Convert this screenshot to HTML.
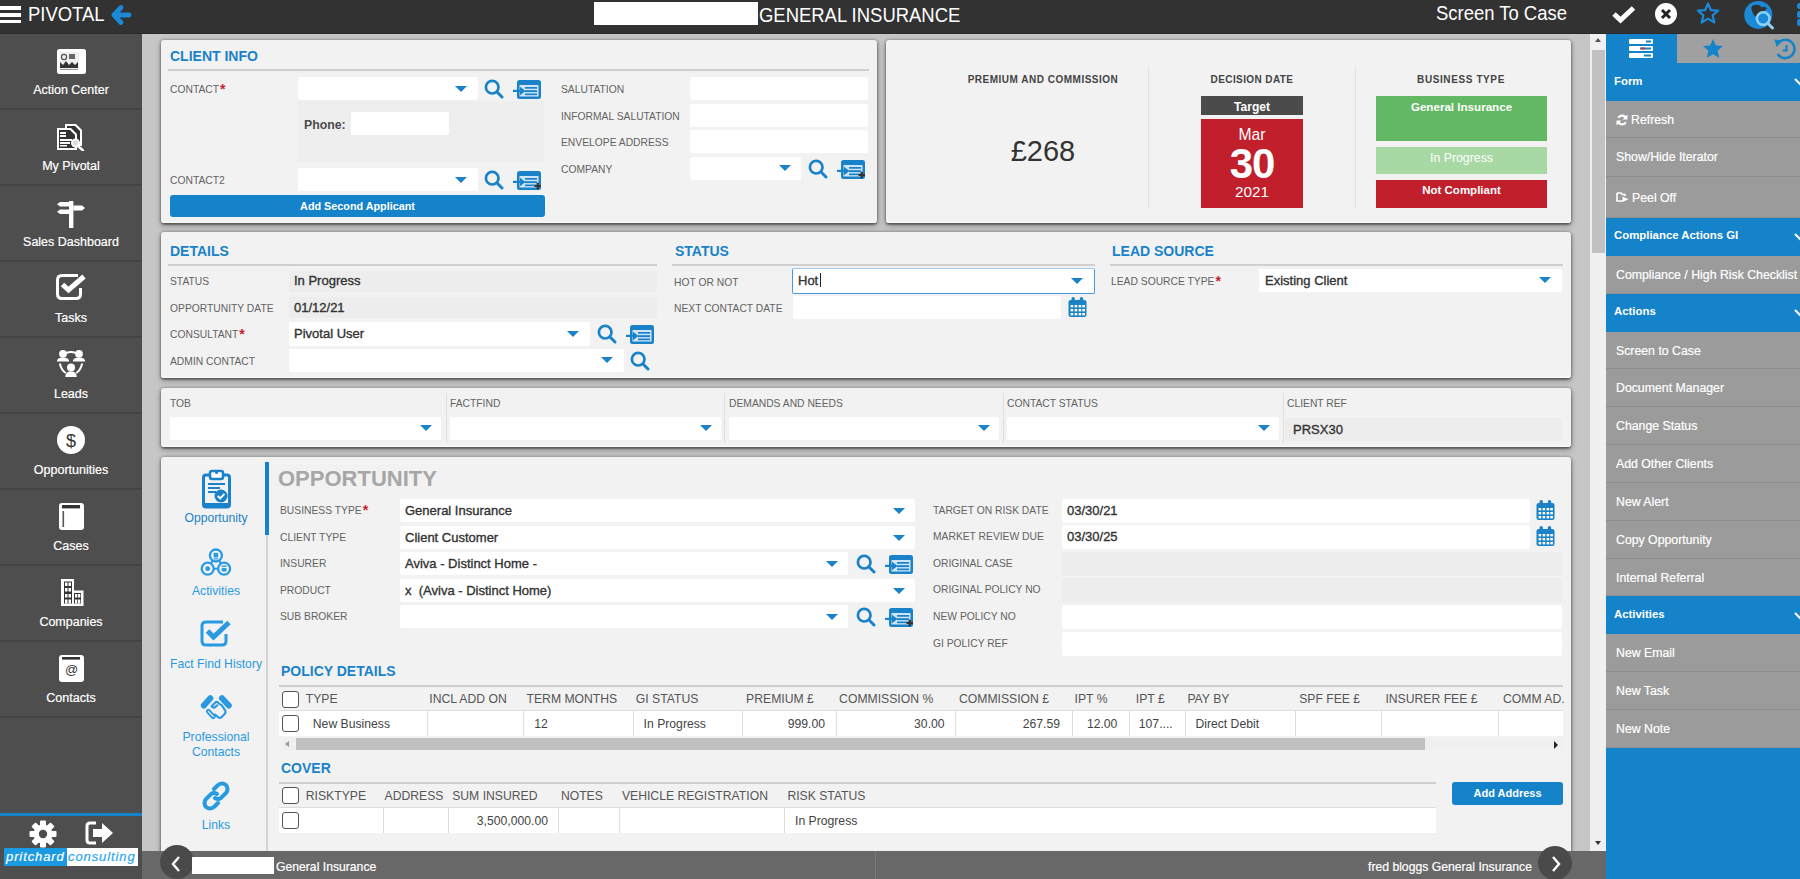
<!DOCTYPE html>
<html><head><meta charset="utf-8">
<style>
*{box-sizing:border-box;margin:0;padding:0}
body{width:1800px;height:879px;overflow:hidden;position:relative;font-family:"Liberation Sans",sans-serif;background:#c6c6c6;color:#333}
.a{position:absolute}
#top{left:0;top:0;width:1800px;height:34px;background:#323232;color:#fff;border-bottom:1px solid #2a2a2a}
#side{left:0;top:34px;width:142px;height:845px;background:#4e4e4e}
.si{position:absolute;left:0;width:142px;height:76px;border-bottom:2px solid #444;color:#fff;font-size:12.5px;text-align:center}
.si span{position:absolute;left:0;right:0;top:49px;-webkit-text-stroke:.2px #fff}
.si svg{position:absolute;left:56px;top:14px}
.panel{position:absolute;background:#f2f2f2;box-shadow:inset 0 -1.5px 0 #f8f8f8,0 2px 2px rgba(0,0,0,.33),0 3px 6px rgba(0,0,0,.25),-1px 0 3px rgba(0,0,0,.2),1px 0 3px rgba(0,0,0,.2);border-radius:3px}
.h{position:absolute;margin-top:1px;color:#1a82c8;font-weight:bold;font-size:14px;}
.ln{position:absolute;height:2px;background:#cfcfcf}
.lb{position:absolute;margin-top:1px;font-size:10.3px;color:#636363;text-transform:uppercase;white-space:nowrap}
.req{color:#c8202c;font-size:14px;line-height:14px;position:absolute;top:-2px;margin-left:1px;font-weight:bold}
.in{position:absolute;background:#fff;border-radius:2px}
.dis{position:absolute;background:#ededed;border-radius:2px}
.val{position:absolute;font-size:13px;color:#333;white-space:nowrap;-webkit-text-stroke:.35px #333}
.dd{position:absolute;width:0;height:0;border-left:6px solid transparent;border-right:6px solid transparent;border-top:6px solid #1a82c8}
#rp{left:1606px;top:34px;width:194px;height:845px;background:#1483c9}
.ri{position:absolute;left:0;width:194px;height:38px;background:#9b9b9b;border-bottom:1px solid #8d8d8d;color:#fff;font-size:12.3px;padding-left:10px;line-height:37px;white-space:nowrap;overflow:hidden;-webkit-text-stroke:.2px #fff}
.rh{position:absolute;left:0;width:194px;height:38px;background:#1483c9;color:#fff;font-size:11.4px;font-weight:bold;padding-left:8px;line-height:37px;white-space:nowrap}
#bot{left:142px;top:851px;width:1464px;height:28px;background:#686868}
.nt{position:absolute;font-size:12.2px;color:#2a9ae0;text-align:center;white-space:nowrap}
.th{position:absolute;font-size:12.2px;color:#555;white-space:nowrap;top:0}
.cb{position:absolute;width:17px;height:17px;border:1.5px solid #555;border-radius:3px;background:#fff}
</style></head>
<body>
<svg width="0" height="0" style="position:absolute"><defs>
<symbol id="srch" viewBox="0 0 20 20"><circle cx="8.2" cy="8.2" r="6.3" fill="none" stroke="#1a82c8" stroke-width="2.7"/><path d="M12.8 12.8 L18 18" stroke="#1a82c8" stroke-width="3" stroke-linecap="round"/></symbol>
<symbol id="add" viewBox="0 0 28 19"><rect x="4" y="0" width="24" height="19" rx="2.5" fill="#1a82c8"/><rect x="6.5" y="5" width="19" height="11.5" fill="#cfe4f4"/><rect x="12" y="7" width="12" height="1.7" fill="#1a82c8"/><rect x="12" y="10.2" width="12" height="1.9" fill="#1a82c8"/><rect x="12" y="13.5" width="12" height="1.7" fill="#1a82c8"/><path d="M0.8 10.9 H8" stroke="#1a82c8" stroke-width="2.4" stroke-linecap="round"/><path d="M7 6.8 L12.5 11 L7 15.2 Z" fill="#1a82c8"/></symbol>
<symbol id="addp" viewBox="0 0 28 19"><use href="#add"/><path d="M21.5 15 H28 M24.75 11.8 V18.3" stroke="#333" stroke-width="2.2"/></symbol>
<symbol id="cal" viewBox="0 0 19 20"><rect x="0.5" y="3" width="18" height="17" rx="2.2" fill="#1a82c8"/><rect x="3.5" y="0" width="3.4" height="5.5" rx="1.7" fill="#1a82c8"/><rect x="11.8" y="0" width="3.4" height="5.5" rx="1.7" fill="#1a82c8"/><g fill="#fff"><rect x="2.6" y="8" width="2.6" height="2.4"/><rect x="6.6" y="8" width="2.6" height="2.4"/><rect x="10.6" y="8" width="2.6" height="2.4"/><rect x="14.3" y="8" width="2.6" height="2.4"/><rect x="2.6" y="12" width="2.6" height="2.4"/><rect x="6.6" y="12" width="2.6" height="2.4"/><rect x="10.6" y="12" width="2.6" height="2.4"/><rect x="14.3" y="12" width="2.6" height="2.4"/><rect x="2.6" y="16" width="2.6" height="2.4"/><rect x="6.6" y="16" width="2.6" height="2.4"/><rect x="10.6" y="16" width="2.6" height="2.4"/><rect x="14.3" y="16" width="2.6" height="2.4"/></g></symbol>
</defs></svg>
<!-- TOP BAR -->
<div class="a" id="top">
<div class="a" style="left:0;top:6px;width:21px;height:3.5px;background:#fff"></div>
<div class="a" style="left:0;top:13px;width:21px;height:3.5px;background:#fff"></div>
<div class="a" style="left:0;top:19.5px;width:21px;height:3.5px;background:#fff"></div>
<div class="a" style="left:28px;top:2.3px;font-size:20.5px;line-height:24px;color:#fff;transform:scaleX(.9);transform-origin:0 0">PIVOTAL</div>
<svg class="a" style="left:110px;top:4px" width="22" height="22" viewBox="0 0 22 22"><path d="M11 3.5 L4 11 L11 18.5 M4 11 H19" stroke="#1a8ad8" stroke-width="4.8" fill="none" stroke-linecap="round" stroke-linejoin="round"/></svg>
<div class="a" style="left:594px;top:2px;width:164px;height:23px;background:#fff"></div>
<div class="a" style="left:759px;top:2.8px;font-size:20.5px;line-height:24px;color:#fff;transform:scaleX(.9);transform-origin:0 0">GENERAL INSURANCE</div>
<div class="a" style="left:1436px;top:1.3px;font-size:20.5px;line-height:24px;color:#fff;transform:scaleX(.9);transform-origin:0 0">Screen To Case</div>
<svg class="a" style="left:1611px;top:4px" width="26" height="20" viewBox="0 0 26 20"><path d="M3 10 L9.5 16 L22.5 4" stroke="#fff" stroke-width="5" fill="none" stroke-linejoin="miter"/></svg>
<svg class="a" style="left:1654px;top:2px" width="24" height="24" viewBox="0 0 24 24"><circle cx="12" cy="12" r="11" fill="#fff"/><path d="M8 8 L16 16 M16 8 L8 16" stroke="#222" stroke-width="3"/></svg>
<svg class="a" style="left:1696px;top:2px" width="24" height="23" viewBox="0 0 24 23"><path d="M12 1.5 L14.9 8.2 L22.2 8.6 L16.6 13.3 L18.4 20.5 L12 16.6 L5.6 20.5 L7.4 13.3 L1.8 8.6 L9.1 8.2 Z" stroke="#1a8ad8" stroke-width="2.2" fill="none" stroke-linejoin="round"/></svg>
<svg class="a" style="left:1743px;top:0px" width="34" height="32" viewBox="0 0 34 32"><circle cx="15.3" cy="14.9" r="14" fill="#1a8ad8"/><path d="M9.5 5.5 Q14 4 17 5.5 L18.5 7.5 L21.5 6.5 L24 8.5 L20 12 L17 14 L15 17 L12 16.5 L9.5 12.5 L8.2 8 Z" fill="#323232"/><circle cx="20.2" cy="18.6" r="6.3" fill="#1a8ad8" stroke="#8fd0f5" stroke-width="2.6"/><path d="M24.8 23.2 L29.5 28" stroke="#8fd0f5" stroke-width="3" stroke-linecap="round"/></svg>
<div class="a" style="left:1797px;top:2.5px;width:7px;height:6.5px;border-radius:2.5px;background:#1a8ad8"></div>
<div class="a" style="left:1797px;top:11px;width:7px;height:6.5px;border-radius:2.5px;background:#1a8ad8"></div>
<div class="a" style="left:1797px;top:19px;width:7px;height:6.5px;border-radius:2.5px;background:#1a8ad8"></div>
</div>

<!-- SIDEBAR -->
<div class="a" id="side">
<div class="si" style="top:0px"><svg class="a" style="left:56px;top:14px" width="31" height="27" viewBox="0 0 31 27"><rect x="1" y="1" width="29" height="25" rx="2.5" fill="#fff"/><rect x="4" y="4" width="19" height="17" fill="#eee"/><circle cx="8" cy="9" r="2.6" fill="none" stroke="#555" stroke-width="1.2"/><rect x="13" y="6" width="6" height="5" fill="#666"/><path d="M4 20 L4 14 L7 17 L10 13 L13 17 L16 14 L19 17 L22 14 L22 20 Z" fill="#333"/><rect x="4" y="21" width="18" height="1" fill="#999"/></svg><span>Action Center</span></div>
<div class="si" style="top:76px"><svg class="a" style="left:56px;top:13px" width="32" height="28" viewBox="0 0 32 28"><path d="M9 1 H20 L26 7 V23 H9 Z" fill="#fff" stroke="#4b4b4b" stroke-width="0"/><path d="M11 3 H19 L24 8 V21 H11 Z" fill="#333"/><path d="M1 5 H15 L21 11 V27 H1 Z" fill="#fff"/><path d="M3 7 H14 L19 12 V25 H3 Z" fill="#333"/><rect x="4" y="9" width="6" height="2" fill="#fff"/><rect x="4" y="12" width="6" height="2" fill="#fff"/><rect x="4" y="16" width="12" height="2" fill="#fff"/><rect x="4" y="19" width="10" height="2" fill="#fff"/><rect x="4" y="22" width="7" height="1.5" fill="#fff"/><circle cx="19.5" cy="20" r="3.6" fill="#ddd" stroke="#fff" stroke-width="1.8"/><path d="M22 23 L27 27.5" stroke="#fff" stroke-width="2.4" stroke-linecap="round"/></svg><span>My Pivotal</span></div>
<div class="si" style="top:152px"><svg class="a" style="left:56px;top:13px" width="30" height="30" viewBox="0 0 30 30"><rect x="13" y="2" width="4.4" height="27" fill="#fff"/><path d="M13 3 H4 L1 5.3 L4 7.5 H13 Z" fill="#fff"/><path d="M13 10.5 H4 L1 12.7 L4 15 H13 Z" fill="#fff"/><path d="M17.4 6.5 H26 L29 9 L26 11.5 H17.4 Z" fill="#fff"/></svg><span>Sales Dashboard</span></div>
<div class="si" style="top:228px"><svg class="a" style="left:56px;top:12px" width="32" height="26" viewBox="0 0 32 26"><path d="M22 1.5 H6 Q1.5 1.5 1.5 6 V20 Q1.5 24.5 6 24.5 H20 Q24.5 24.5 24.5 20 V14" fill="none" stroke="#fff" stroke-width="3"/><path d="M6.5 10.5 L12.5 16 L28 2.5" fill="none" stroke="#fff" stroke-width="5"/></svg><span>Tasks</span></div>
<div class="si" style="top:304px"><svg class="a" style="left:56px;top:11px" width="30" height="29" viewBox="0 0 30 29"><circle cx="7" cy="4.8" r="3.9" fill="#fff"/><path d="M0.8 12.5 Q1 8.6 7 8.6 Q13 8.6 13.2 12.5 Z" fill="#fff"/><circle cx="23" cy="4.8" r="3.9" fill="#fff"/><path d="M16.8 12.5 Q17 8.6 23 8.6 Q29 8.6 29.2 12.5 Z" fill="#fff"/><circle cx="15" cy="18.5" r="4" fill="#fff"/><path d="M9.2 28 Q9.4 22.6 15 22.6 Q20.6 22.6 20.8 28 Z" fill="#fff"/><path d="M10.2 4 Q15 1.8 19.8 4" fill="none" stroke="#fff" stroke-width="2"/><path d="M3.8 14.5 Q5.5 21.5 9.8 24" fill="none" stroke="#fff" stroke-width="2"/><path d="M26.2 14.5 Q24.5 21.5 20.2 24" fill="none" stroke="#fff" stroke-width="2"/></svg><span>Leads</span></div>
<div class="si" style="top:380px"><svg class="a" style="left:56px;top:11px" width="30" height="30" viewBox="0 0 30 30"><circle cx="15" cy="15" r="14" fill="#fff"/><text x="15" y="21.5" font-family="Liberation Sans" font-size="18" text-anchor="middle" fill="#333">$</text></svg><span>Opportunities</span></div>
<div class="si" style="top:456px"><svg class="a" style="left:58px;top:12px" width="27" height="29" viewBox="0 0 27 29"><rect x="1" y="1" width="25" height="27" rx="3" fill="#fff"/><rect x="4" y="3" width="18" height="3.4" fill="#333"/><rect x="4.5" y="9" width="1.6" height="16" fill="#555"/></svg><span>Cases</span></div>
<div class="si" style="top:532px"><svg class="a" style="left:60px;top:12px" width="25" height="29" viewBox="0 0 25 29"><path d="M1 1 H14 V12.5 H23.5 V28 H1 Z" fill="#fff"/><g fill="#333"><rect x="4" y="3.5" width="8" height="22"/><rect x="14" y="15" width="7" height="10.5"/></g><g fill="#fff"><rect x="5" y="4.5" width="2.5" height="3.5"/><rect x="8.5" y="4.5" width="2.5" height="3.5"/><rect x="5" y="10" width="2.5" height="3.5"/><rect x="8.5" y="10" width="2.5" height="3.5"/><rect x="5" y="16" width="2.5" height="3.5"/><rect x="8.5" y="16" width="2.5" height="3.5"/><rect x="15" y="16" width="2.3" height="3.5"/><rect x="18" y="16" width="2.3" height="3.5"/><rect x="5" y="21.5" width="2.5" height="4"/><rect x="8.5" y="21.5" width="2.5" height="4"/><rect x="15" y="21.5" width="2.3" height="4"/><rect x="18" y="21.5" width="2.3" height="4"/></g></svg><span>Companies</span></div>
<div class="si" style="top:608px"><svg class="a" style="left:58px;top:12px" width="27" height="29" viewBox="0 0 27 29"><rect x="1" y="1" width="25" height="27" rx="3" fill="#fff"/><rect x="4" y="3" width="18" height="2.6" fill="#333"/><text x="13.5" y="20" font-family="Liberation Sans" font-size="13" text-anchor="middle" fill="#333">@</text></svg><span>Contacts</span></div>
<div class="a" style="left:0;top:779px;width:142px;height:3px;background:#1483c9"></div>
<svg class="a" style="left:28px;top:785px" width="30" height="30" viewBox="0 0 30 30"><g fill="#fff"><circle cx="15" cy="15" r="9.5"/><g id="t"><rect x="12" y="1.5" width="6" height="6" rx="1"/><rect x="12" y="22.5" width="6" height="6" rx="1"/><rect x="1.5" y="12" width="6" height="6" rx="1"/><rect x="22.5" y="12" width="6" height="6" rx="1"/></g><g transform="rotate(45 15 15)"><rect x="12" y="1.5" width="6" height="6" rx="1"/><rect x="12" y="22.5" width="6" height="6" rx="1"/><rect x="1.5" y="12" width="6" height="6" rx="1"/><rect x="22.5" y="12" width="6" height="6" rx="1"/></g></g><circle cx="15" cy="15" r="4.2" fill="#4b4b4b"/></svg>
<svg class="a" style="left:85px;top:787px" width="30" height="24" viewBox="0 0 30 24"><path d="M11 2 H5 Q2 2 2 5 V19 Q2 22 5 22 H11" fill="none" stroke="#fff" stroke-width="3"/><path d="M8 8 H17 V2 L28 12 L17 22 V16 H8 Z" fill="#fff"/></svg>
<div class="a" style="left:4px;top:814px;width:63px;height:18px;background:#1a9ae0;color:#fff;font-style:italic;font-size:13px;line-height:17px;padding-left:2px;letter-spacing:.9px;-webkit-text-stroke:.2px #fff;white-space:nowrap;overflow:hidden">pritchard</div>
<div class="a" style="left:67px;top:814px;width:71px;height:18px;background:#fff;color:#2aa6ec;font-style:italic;font-size:13px;line-height:17px;padding-left:1px;letter-spacing:.9px;-webkit-text-stroke:.2px #2aa6ec;white-space:nowrap;overflow:hidden">consulting</div>
</div>

<!-- PANELS -->
<div class="panel" style="left:161px;top:40px;width:716px;height:183px"></div>
<div class="panel" style="left:886px;top:40px;width:685px;height:183px"></div>
<div class="panel" style="left:161px;top:232px;width:1410px;height:146px"></div>
<div class="panel" style="left:161px;top:388px;width:1410px;height:59px"></div>
<div class="panel" style="left:161px;top:457px;width:1410px;height:420px"></div>

<div class="h" style="left:170px;top:47px">CLIENT INFO</div>
<div class="ln" style="left:168px;top:69px;width:701px"></div>
<div class="lb" style="left:170px;top:83px">Contact<span class=req>*</span></div>
<div class="in" style="left:298px;top:77px;width:180px;height:23px"></div>
<div class="dd" style="left:455px;top:86px"></div>
<svg class="a" style="left:484px;top:79px" width="20" height="20"><use href="#srch"/></svg>
<svg class="a" style="left:513px;top:80px" width="28" height="19"><use href="#add"/></svg>
<div class="a" style="left:298px;top:101px;width:246px;height:61px;background:#eeeeee"></div>
<div class="a" style="left:304px;top:117.5px;font-size:12.3px;font-weight:bold;color:#4a4a4a">Phone:</div>
<div class="in" style="left:351px;top:112px;width:98px;height:23px"></div>
<div class="lb" style="left:170px;top:174px">Contact2</div>
<div class="in" style="left:298px;top:168px;width:180px;height:23px"></div>
<div class="dd" style="left:455px;top:177px"></div>
<svg class="a" style="left:484px;top:170px" width="20" height="20"><use href="#srch"/></svg>
<svg class="a" style="left:513px;top:171px" width="28" height="19"><use href="#addp"/></svg>
<div class="a" style="left:170px;top:195px;width:375px;height:22px;background:#1483c9;border-radius:3px;color:#fff;font-weight:bold;font-size:10.8px;line-height:22px;text-align:center">Add Second Applicant</div>
<div class="lb" style="left:561px;top:83.0px">Salutation</div>
<div class="in" style="left:690px;top:77.0px;width:178px;height:23px"></div>
<div class="lb" style="left:561px;top:109.6px">Informal Salutation</div>
<div class="in" style="left:690px;top:103.6px;width:178px;height:23px"></div>
<div class="lb" style="left:561px;top:136.2px">Envelope Address</div>
<div class="in" style="left:690px;top:130.2px;width:178px;height:23px"></div>
<div class="lb" style="left:561px;top:162.8px">Company</div>
<div class="in" style="left:690px;top:157px;width:111px;height:23px"></div>
<div class="dd" style="left:779px;top:165px"></div>
<svg class="a" style="left:808px;top:159px" width="20" height="20"><use href="#srch"/></svg>
<svg class="a" style="left:837px;top:160px" width="28" height="19"><use href="#addp"/></svg>
<div class="a" style="left:886px;top:40px;width:262px;text-align:center;font-size:10px;font-weight:bold;letter-spacing:.5px;color:#444;top:74px;padding-left:52px">PREMIUM AND COMMISSION</div>
<div class="a" style="left:943px;top:135px;width:200px;text-align:center;font-size:29px;color:#333">&pound;268</div>
<div class="a" style="left:1148px;top:67px;width:1px;height:141px;background:#e2e2e2"></div>
<div class="a" style="left:1355px;top:67px;width:1px;height:141px;background:#e2e2e2"></div>
<div class="a" style="left:1152px;top:74px;width:200px;text-align:center;font-size:10px;font-weight:bold;letter-spacing:.4px;color:#444">DECISION DATE</div>
<div class="a" style="left:1201px;top:96px;width:102px;height:19px;background:#4b4b4b;color:#fff;font-weight:bold;font-size:12px;line-height:22px;text-align:center">Target</div>
<div class="a" style="left:1201px;top:119px;width:102px;height:89px;background:#c11f2c;color:#fff;text-align:center"><div class="a" style="left:0;right:0;top:7px;font-size:15.7px">Mar</div><div class="a" style="left:0;right:0;top:21px;font-size:42px;font-weight:bold;letter-spacing:-1px">30</div><div class="a" style="left:0;right:0;top:64px;font-size:15.3px">2021</div></div>
<div class="a" style="left:1361px;top:74px;width:200px;text-align:center;font-size:10px;font-weight:bold;letter-spacing:.6px;color:#444">BUSINESS TYPE</div>
<div class="a" style="left:1376px;top:96px;width:171px;height:45px;background:#63b963;color:#fff;font-weight:bold;font-size:11.6px;text-align:center;padding-top:4px">General Insurance</div>
<div class="a" style="left:1376px;top:147px;width:171px;height:27px;background:#a8d9a4;color:#fff;font-size:12.3px;text-align:center;padding-top:4px">In Progress</div>
<div class="a" style="left:1376px;top:180px;width:171px;height:28px;background:#c11f2c;color:#fff;font-weight:bold;font-size:11.5px;text-align:center;padding-top:4px">Not Compliant</div>
<!-- DETAILS -->
<div class="h" style="left:170px;top:242px">DETAILS</div>
<div class="ln" style="left:168px;top:264px;width:489px"></div>
<div class="lb" style="left:170px;top:275px">Status</div>
<div class="dis" style="left:289px;top:271px;width:368px;height:21px"></div>
<div class="val" style="left:294px;top:273px;">In Progress</div>
<div class="lb" style="left:170px;top:302px">Opportunity Date</div>
<div class="dis" style="left:289px;top:297px;width:368px;height:21px"></div>
<div class="val" style="left:294px;top:300px;">01/12/21</div>
<div class="lb" style="left:170px;top:328px">Consultant<span class=req>*</span></div>
<div class="in" style="left:289px;top:322px;width:301px;height:24px"></div>
<div class="val" style="left:294px;top:326px;">Pivotal User</div>
<div class="dd" style="left:567px;top:331px"></div>
<svg class="a" style="left:597px;top:324px" width="20" height="20"><use href="#srch"/></svg>
<svg class="a" style="left:626px;top:325px" width="28" height="19"><use href="#add"/></svg>
<div class="lb" style="left:170px;top:355px">Admin Contact</div>
<div class="in" style="left:289px;top:349px;width:335px;height:23px"></div>
<div class="dd" style="left:601px;top:357px"></div>
<svg class="a" style="left:630px;top:351px" width="20" height="20"><use href="#srch"/></svg>
<div class="h" style="left:675px;top:242px">STATUS</div>
<div class="ln" style="left:672px;top:264px;width:423px"></div>
<div class="lb" style="left:674px;top:276px">Hot or Not</div>
<div class="in" style="left:792px;top:268px;width:303px;height:26px;border:1.5px solid #4a9ad8;border-top-color:#9ccbee"></div>
<div class="val" style="left:798px;top:273px;">Hot</div>
<div class="a" style="left:820px;top:273px;width:1px;height:14px;background:#222;"></div>
<div class="dd" style="left:1071px;top:278px"></div>
<div class="lb" style="left:674px;top:302px">Next Contact Date</div>
<div class="in" style="left:793px;top:296px;width:268px;height:23px"></div>
<svg class="a" style="left:1068px;top:297px" width="19" height="20"><use href="#cal"/></svg>
<div class="h" style="left:1112px;top:242px">LEAD SOURCE</div>
<div class="ln" style="left:1110px;top:264px;width:453px"></div>
<div class="lb" style="left:1111px;top:275px">Lead Source Type<span class=req>*</span></div>
<div class="in" style="left:1259px;top:269px;width:303px;height:23px"></div>
<div class="val" style="left:1265px;top:273px;">Existing Client</div>
<div class="dd" style="left:1539px;top:277px"></div>
<!-- TOB -->
<div class="lb" style="left:170px;top:397px">TOB</div>
<div class="in" style="left:170px;top:417px;width:271px;height:23px"></div>
<div class="dd" style="left:420px;top:425px"></div>
<div class="lb" style="left:450px;top:397px">Factfind</div>
<div class="in" style="left:450px;top:417px;width:271px;height:23px"></div>
<div class="dd" style="left:700px;top:425px"></div>
<div class="lb" style="left:729px;top:397px">Demands and Needs</div>
<div class="in" style="left:729px;top:417px;width:270px;height:23px"></div>
<div class="dd" style="left:978px;top:425px"></div>
<div class="lb" style="left:1007px;top:397px">Contact Status</div>
<div class="in" style="left:1007px;top:417px;width:272px;height:23px"></div>
<div class="dd" style="left:1258px;top:425px"></div>
<div class="a" style="left:446px;top:393px;width:1px;height:50px;background:#dedede;"></div>
<div class="a" style="left:724px;top:393px;width:1px;height:50px;background:#dedede;"></div>
<div class="a" style="left:1003px;top:393px;width:1px;height:50px;background:#dedede;"></div>
<div class="a" style="left:1283px;top:393px;width:1px;height:50px;background:#dedede;"></div>
<div class="lb" style="left:1287px;top:397px">Client Ref</div>
<div class="dis" style="left:1285px;top:418px;width:277px;height:23px"></div>
<div class="val" style="left:1293px;top:422px;">PRSX30</div>
<!-- OPP -->
<div class="a" style="left:266px;top:462px;width:2px;height:389px;background:#d4d4d4;"></div>
<div class="a" style="left:265px;top:462px;width:4px;height:73px;background:#1483c9;"></div>
<div class="a" style="left:278px;top:466px;font-size:22px;font-weight:bold;color:#a6a6a6">OPPORTUNITY</div>
<div class="lb" style="left:280px;top:504.0px">Business Type<span class=req>*</span></div>
<div class="in" style="left:400px;top:499.0px;width:515px;height:23px"></div>
<div class="val" style="left:405px;top:503.0px;">General Insurance</div>
<div class="dd" style="left:893px;top:508.0px"></div>
<div class="lb" style="left:280px;top:530.6px">Client Type</div>
<div class="in" style="left:400px;top:525.6px;width:515px;height:23px"></div>
<div class="val" style="left:405px;top:529.6px;">Client Customer</div>
<div class="dd" style="left:893px;top:534.6px"></div>
<div class="lb" style="left:280px;top:557.2px">Insurer</div>
<div class="in" style="left:400px;top:552.2px;width:448px;height:23px"></div>
<div class="val" style="left:405px;top:556.2px;">Aviva - Distinct Home -</div>
<div class="dd" style="left:826px;top:561.2px"></div>
<svg class="a" style="left:856px;top:554.2px" width="20" height="20"><use href="#srch"/></svg>
<svg class="a" style="left:885px;top:555.2px" width="28" height="19"><use href="#add"/></svg>
<div class="lb" style="left:280px;top:583.8px">Product</div>
<div class="in" style="left:400px;top:578.8px;width:515px;height:23px"></div>
<div class="val" style="left:405px;top:582.8px;">x&nbsp; (Aviva - Distinct Home)</div>
<div class="dd" style="left:893px;top:587.8px"></div>
<div class="lb" style="left:280px;top:610.4px">Sub Broker</div>
<div class="in" style="left:400px;top:605.4px;width:448px;height:23px"></div>
<div class="dd" style="left:826px;top:614.4px"></div>
<svg class="a" style="left:856px;top:607.4px" width="20" height="20"><use href="#srch"/></svg>
<svg class="a" style="left:885px;top:608.4px" width="28" height="19"><use href="#addp"/></svg>
<div class="lb" style="left:933px;top:503.5px">Target on Risk Date</div>
<div class="in" style="left:1062px;top:498.5px;width:468px;height:24px"></div>
<div class="val" style="left:1067px;top:502.5px;">03/30/21</div>
<svg class="a" style="left:1536px;top:499.5px" width="19" height="20"><use href="#cal"/></svg>
<div class="lb" style="left:933px;top:530.1px">Market Review Due</div>
<div class="in" style="left:1062px;top:525.1px;width:468px;height:24px"></div>
<div class="val" style="left:1067px;top:529.1px;">03/30/25</div>
<svg class="a" style="left:1536px;top:526.1px" width="19" height="20"><use href="#cal"/></svg>
<div class="lb" style="left:933px;top:556.7px">Original Case</div>
<div class="dis" style="left:1062px;top:551.7px;width:500px;height:24px"></div>
<div class="lb" style="left:933px;top:583.3px">Original Policy No</div>
<div class="dis" style="left:1062px;top:578.3px;width:500px;height:24px"></div>
<div class="lb" style="left:933px;top:609.9px">New Policy No</div>
<div class="in" style="left:1062px;top:604.9px;width:500px;height:24px"></div>
<div class="lb" style="left:933px;top:636.5px">GI Policy Ref</div>
<div class="in" style="left:1062px;top:631.5px;width:500px;height:24px"></div>
<!-- SUBNAV -->
<svg class="a" style="left:202px;top:469px" width="29" height="40" viewBox="0 0 29 40"><rect x="1.5" y="6" width="26" height="32" rx="2.5" fill="none" stroke="#1a82c8" stroke-width="3"/><rect x="8" y="2" width="13" height="8" rx="2" fill="#fff" stroke="#1a82c8" stroke-width="2.5"/><circle cx="14.5" cy="3.5" r="1.5" fill="#1a82c8"/><rect x="6" y="14" width="17" height="2" fill="#1a82c8"/><rect x="6" y="18" width="12" height="2" fill="#1a82c8"/><rect x="6" y="22" width="8" height="2" fill="#1a82c8"/><rect x="1.5" y="34" width="26" height="4" fill="#1a82c8"/><circle cx="19" cy="27" r="6.5" fill="#1a82c8"/><path d="M15.8 27 L18.2 29.4 L22.4 24.8" fill="none" stroke="#fff" stroke-width="2"/></svg>
<div class="nt" style="left:161px;width:110px;top:510.5px;color:#1a82c8">Opportunity</div>
<svg class="a" style="left:199px;top:547px" width="34" height="30" viewBox="0 0 34 30"><path d="M16.9 8.5 L8.7 21.7 L25.1 21.7 Z" fill="none" stroke="#2a9ae0" stroke-width="2"/><g fill="#f2f2f2" stroke="#2a9ae0" stroke-width="2.3"><circle cx="16.9" cy="8.5" r="6"/><circle cx="8.7" cy="21.7" r="6"/><circle cx="25.1" cy="21.7" r="6"/></g><g fill="#2a9ae0"><rect x="14.6" y="5.8" width="4.6" height="4.6"/><rect x="14.6" y="11.2" width="4.6" height="1.2"/><circle cx="8.7" cy="21.7" r="2.4"/><rect x="22.6" y="18.5" width="5" height="1.4"/><rect x="22.6" y="21" width="5" height="3.5" rx="1"/></g></svg>
<div class="nt" style="left:161px;width:110px;top:583.5px;color:#2a9ae0">Activities</div>
<svg class="a" style="left:200px;top:619px" width="32" height="28" viewBox="0 0 32 28"><path d="M23 3 H6 Q2 3 2 7 V22 Q2 26 6 26 H22 Q26 26 26 22 V15" fill="none" stroke="#2a9ae0" stroke-width="3"/><path d="M7.5 12 L13.5 18 L29 3.5" fill="none" stroke="#2a9ae0" stroke-width="5"/></svg>
<div class="nt" style="left:161px;width:110px;top:656.5px;color:#2a9ae0">Fact Find History</div>
<svg class="a" style="left:199px;top:694px" width="34" height="27" viewBox="0 0 34 27"><g stroke="#2a9ae0" stroke-linecap="round" fill="none"><path d="M4.8 11.5 L11.3 4.2" stroke-width="6"/><path d="M23 4.2 L29.8 11.5" stroke-width="6"/><path d="M12.6 12.3 L16.6 8.2 Q17.8 7.3 19 8.6 Q20.5 10.5 22.6 11 L26.4 16.8 Q27 18.5 25.6 20 L22.4 23.2 Q21 24.5 19.4 23.4 L16 20.5 M12.6 12.3 Q14 14.3 16 13.2 L18.2 11.4" stroke-width="2.2" stroke-linejoin="round"/><path d="M9.4 17.4 L14.2 22.6" stroke-width="5"/></g><path d="M9.4 17.4 L14.2 22.6" stroke="#f2f2f2" stroke-width="1.2" stroke-linecap="round"/></svg>
<div class="nt" style="left:161px;width:110px;top:729.5px;color:#2a9ae0;line-height:15.5px">Professional<br>Contacts</div>
<svg class="a" style="left:200px;top:781px" width="32" height="30" viewBox="0 0 32 30"><g fill="none" stroke="#2a9ae0" stroke-width="4" stroke-linecap="round"><path d="M14 8 L18 4 Q22 1 26 4 Q29 8 26 12 L21 17 Q18 19 15 17"/><path d="M18 22 L14 26 Q10 29 6 26 Q3 22 6 18 L11 13 Q14 11 17 13"/></g></svg>
<div class="nt" style="left:161px;width:110px;top:817.5px;color:#2a9ae0">Links</div>
<!-- POLICY -->
<div class="h" style="left:281px;top:662px">POLICY DETAILS</div>
<div class="a" style="left:279px;top:685px;width:1284px;height:2px;background:#cfcfcf;"></div>
<div class="a" style="left:279px;top:710px;width:1284px;height:1px;background:#dcdcdc;"></div>
<div class="a" style="left:279px;top:711px;width:1284px;height:25px;background:#fff;"></div>
<div class="cb" style="left:282px;top:691px"></div>
<div class="cb" style="left:282px;top:715px"></div>
<div class="th" style="left:305.8px;top:691.5px">TYPE</div>
<div class="th" style="left:429.3px;top:691.5px">INCL ADD ON</div>
<div class="th" style="left:526.5px;top:691.5px">TERM MONTHS</div>
<div class="th" style="left:635.8px;top:691.5px">GI STATUS</div>
<div class="th" style="left:746.1px;top:691.5px">PREMIUM &pound;</div>
<div class="th" style="left:839.1px;top:691.5px">COMMISSION %</div>
<div class="th" style="left:959px;top:691.5px">COMMISSION &pound;</div>
<div class="th" style="left:1074.6px;top:691.5px">IPT %</div>
<div class="th" style="left:1135.8px;top:691.5px">IPT &pound;</div>
<div class="th" style="left:1187.4px;top:691.5px">PAY BY</div>
<div class="th" style="left:1299.2px;top:691.5px">SPF FEE &pound;</div>
<div class="th" style="left:1385.4px;top:691.5px">INSURER FEE &pound;</div>
<div class="th" style="left:1503px;top:691.5px">COMM AD.</div>
<div class="a" style="left:427px;top:711px;width:1px;height:25px;background:#dedede;"></div>
<div class="a" style="left:523px;top:711px;width:1px;height:25px;background:#dedede;"></div>
<div class="a" style="left:633px;top:711px;width:1px;height:25px;background:#dedede;"></div>
<div class="a" style="left:742px;top:711px;width:1px;height:25px;background:#dedede;"></div>
<div class="a" style="left:836px;top:711px;width:1px;height:25px;background:#dedede;"></div>
<div class="a" style="left:955px;top:711px;width:1px;height:25px;background:#dedede;"></div>
<div class="a" style="left:1072px;top:711px;width:1px;height:25px;background:#dedede;"></div>
<div class="a" style="left:1129px;top:711px;width:1px;height:25px;background:#dedede;"></div>
<div class="a" style="left:1185px;top:711px;width:1px;height:25px;background:#dedede;"></div>
<div class="a" style="left:1295px;top:711px;width:1px;height:25px;background:#dedede;"></div>
<div class="a" style="left:1381px;top:711px;width:1px;height:25px;background:#dedede;"></div>
<div class="a" style="left:1498px;top:711px;width:1px;height:25px;background:#dedede;"></div>
<div class="th" style="left:312.8px;top:716.5px;color:#444">New Business</div>
<div class="th" style="left:534.3px;top:716.5px;color:#444">12</div>
<div class="th" style="left:643.6px;top:716.5px;color:#444">In Progress</div>
<div class="th" style="left:625px;width:200px;text-align:right;top:716.5px;color:#444">999.00</div>
<div class="th" style="left:744.6px;width:200px;text-align:right;top:716.5px;color:#444">30.00</div>
<div class="th" style="left:860px;width:200px;text-align:right;top:716.5px;color:#444">267.59</div>
<div class="th" style="left:917.4000000000001px;width:200px;text-align:right;top:716.5px;color:#444">12.00</div>
<div class="th" style="left:1138.8px;top:716.5px;color:#444">107....</div>
<div class="th" style="left:1195.4px;top:716.5px;color:#444">Direct Debit</div>
<div class="a" style="left:279px;top:738px;width:1284px;height:12px;background:#f0f0f0;"></div>
<div class="a" style="left:296px;top:738px;width:1129px;height:12px;background:#c0c0c0;"></div>
<div class="a" style="left:285px;top:741px;width:0;height:0;border-top:3.5px solid transparent;border-bottom:3.5px solid transparent;border-right:4px solid #999"></div>
<div class="a" style="left:1554px;top:740.5px;width:0;height:0;border-top:4px solid transparent;border-bottom:4px solid transparent;border-left:4px solid #222"></div>
<div class="h" style="left:281px;top:759px">COVER</div>
<div class="a" style="left:279px;top:782px;width:1157px;height:2px;background:#cfcfcf;"></div>
<div class="a" style="left:279px;top:807px;width:1157px;height:1px;background:#dcdcdc;"></div>
<div class="a" style="left:279px;top:808px;width:1157px;height:25px;background:#fff;"></div>
<div class="cb" style="left:282px;top:787px"></div>
<div class="cb" style="left:282px;top:812px"></div>
<div class="th" style="left:305.8px;top:788.5px">RISKTYPE</div>
<div class="th" style="left:384.5px;top:788.5px">ADDRESS</div>
<div class="th" style="left:452.2px;top:788.5px">SUM INSURED</div>
<div class="th" style="left:560.9px;top:788.5px">NOTES</div>
<div class="th" style="left:621.9px;top:788.5px">VEHICLE REGISTRATION</div>
<div class="th" style="left:787.4px;top:788.5px">RISK STATUS</div>
<div class="a" style="left:383px;top:808px;width:1px;height:25px;background:#dedede;"></div>
<div class="a" style="left:448px;top:808px;width:1px;height:25px;background:#dedede;"></div>
<div class="a" style="left:558px;top:808px;width:1px;height:25px;background:#dedede;"></div>
<div class="a" style="left:619px;top:808px;width:1px;height:25px;background:#dedede;"></div>
<div class="a" style="left:784px;top:808px;width:1px;height:25px;background:#dedede;"></div>
<div class="th" style="left:348px;width:200px;text-align:right;top:813.5px;color:#444">3,500,000.00</div>
<div class="th" style="left:795px;top:813.5px;color:#444">In Progress</div>
<div class="a" style="left:1452px;top:782px;width:111px;height:23px;background:#1483c9;border-radius:3px;color:#fff;font-weight:bold;font-size:11px;line-height:23px;text-align:center">Add Address</div>
<!-- SCROLLBAR -->
<div class="a" style="left:1590px;top:34px;width:16px;height:817px;background:#f0f0f0"></div>
<div class="a" style="left:1592px;top:50px;width:13px;height:203px;background:#c1c1c1"></div>

<div class="a" style="left:1594.5px;top:38px;width:0;height:0;border-left:3.5px solid transparent;border-right:3.5px solid transparent;border-bottom:4px solid #555"></div>
<div class="a" style="left:1594.5px;top:841px;width:0;height:0;border-left:3.5px solid transparent;border-right:3.5px solid transparent;border-top:4px solid #333"></div>
<!-- RIGHT PANEL -->
<div class="a" id="rp">
<div class="a" style="left:0;top:0;width:71px;height:29px;background:#1483c9"></div>
<div class="a" style="left:71px;top:0;width:123px;height:29px;background:#a0a0a0"></div>
<svg class="a" style="left:22px;top:4px" width="27" height="21" viewBox="0 0 27 21"><g fill="#fff"><rect x="1" y="1" width="24" height="5" rx="1"/><rect x="1" y="8" width="24" height="5" rx="1"/><rect x="1" y="15" width="24" height="5" rx="1"/></g><g fill="#1483c9"><rect x="18" y="2.5" width="5" height="2"/><rect x="12" y="9.5" width="11" height="2"/><rect x="16" y="16.5" width="7" height="2"/></g><rect x="13" y="9.5" width="4" height="2" fill="#d33"/></svg>
<svg class="a" style="left:96px;top:4px" width="22" height="21" viewBox="0 0 22 21"><path d="M11 1 L13.9 7.6 L21 8.1 L15.6 12.8 L17.3 20 L11 16.2 L4.7 20 L6.4 12.8 L1 8.1 L8.1 7.6 Z" fill="#1483c9"/></svg>
<svg class="a" style="left:167px;top:3px" width="24" height="24" viewBox="0 0 24 24"><path d="M6 5.2 A9.2 9.2 0 1 1 4.6 17" fill="none" stroke="#1483c9" stroke-width="2.6"/><path d="M1.5 2.5 L9.5 3.5 L3.5 10 Z" fill="#1483c9"/><path d="M13.5 8 V13.5 H9.5" fill="none" stroke="#1483c9" stroke-width="2.2"/></svg>
<div class="rh" style="top:29.00px;height:38px;line-height:36px">Form<svg class="a" style="left:188px;top:15px" width="12" height="8" viewBox="0 0 12 8"><path d="M1 1 L6 6 L11 1" fill="none" stroke="#fff" stroke-width="2"/></svg></div>
<div class="ri" style="top:67.00px;height:37.3px;line-height:38.3px"><svg style="vertical-align:-2px;margin-right:3px" width="12" height="12" viewBox="0 0 12 12"><path d="M10 4.5 A4.3 4.3 0 0 0 2.2 3.8" fill="none" stroke="#fff" stroke-width="2.2"/><path d="M11.5 0.5 V5.5 H6.5 Z" fill="#fff"/><path d="M2 7.5 A4.3 4.3 0 0 0 9.8 8.2" fill="none" stroke="#fff" stroke-width="2.2"/><path d="M0.5 11.5 V6.5 H5.5 Z" fill="#fff"/></svg>Refresh</div>
<div class="ri" style="top:104.30px;height:38.3px;line-height:39.3px">Show/Hide Iterator</div>
<div class="ri" style="top:142.60px;height:41.4px;line-height:42.4px"><svg style="vertical-align:-1px;margin-right:3px" width="13" height="11" viewBox="0 0 13 11"><path d="M1 1 H5 L6.5 2.5 H9 V4" fill="none" stroke="#fff" stroke-width="1.6"/><path d="M1 1 V9 H7" fill="none" stroke="#fff" stroke-width="1.6"/><path d="M6.5 4.5 L12.5 7.3 L6.5 10 Z" fill="#fff"/></svg>Peel Off</div>
<div class="rh" style="top:184.00px;height:37.85px;line-height:35.85px">Compliance Actions GI<svg class="a" style="left:188px;top:15px" width="12" height="8" viewBox="0 0 12 8"><path d="M1 1 L6 6 L11 1" fill="none" stroke="#fff" stroke-width="2"/></svg></div>
<div class="ri" style="top:221.85px;height:37.85px;line-height:38.85px">Compliance / High Risk Checklist</div>
<div class="rh" style="top:259.70px;height:37.85px;line-height:35.85px">Actions<svg class="a" style="left:188px;top:15px" width="12" height="8" viewBox="0 0 12 8"><path d="M1 1 L6 6 L11 1" fill="none" stroke="#fff" stroke-width="2"/></svg></div>
<div class="ri" style="top:297.55px;height:37.85px;line-height:38.85px">Screen to Case</div>
<div class="ri" style="top:335.40px;height:37.85px;line-height:38.85px">Document Manager</div>
<div class="ri" style="top:373.25px;height:37.85px;line-height:38.85px">Change Status</div>
<div class="ri" style="top:411.10px;height:37.85px;line-height:38.85px">Add Other Clients</div>
<div class="ri" style="top:448.95px;height:37.85px;line-height:38.85px">New Alert</div>
<div class="ri" style="top:486.80px;height:37.85px;line-height:38.85px">Copy Opportunity</div>
<div class="ri" style="top:524.65px;height:37.85px;line-height:38.85px">Internal Referral</div>
<div class="rh" style="top:562.50px;height:37.85px;line-height:35.85px">Activities<svg class="a" style="left:188px;top:15px" width="12" height="8" viewBox="0 0 12 8"><path d="M1 1 L6 6 L11 1" fill="none" stroke="#fff" stroke-width="2"/></svg></div>
<div class="ri" style="top:600.35px;height:37.85px;line-height:38.85px">New Email</div>
<div class="ri" style="top:638.20px;height:37.85px;line-height:38.85px">New Task</div>
<div class="ri" style="top:676.05px;height:37.85px;line-height:38.85px">New Note</div>
</div>

<!-- BOTTOM BAR -->
<div class="a" id="bot">
<div class="a" style="left:733px;top:0;width:1px;height:28px;background:#777"></div>
<div class="a" style="left:18px;top:-6px;width:34px;height:34px;border-radius:17px;background:#4a4a4a"></div>
<svg class="a" style="left:27px;top:3px" width="14" height="20" viewBox="0 0 14 20"><path d="M10 3 L4 10 L10 17" fill="none" stroke="#fff" stroke-width="2.4"/></svg>
<div class="a" style="left:50px;top:6px;width:82px;height:17px;background:#fff"></div>
<div class="a" style="left:134px;top:8.5px;font-size:12.2px;color:#fff;-webkit-text-stroke:.2px #fff">General Insurance</div>
<div class="a" style="left:1226px;top:8.5px;font-size:12.2px;color:#fff;-webkit-text-stroke:.2px #fff">fred bloggs General Insurance</div>
<div class="a" style="left:1396px;top:-5px;width:34px;height:34px;border-radius:17px;background:#4a4a4a"></div>
<svg class="a" style="left:1407px;top:3px" width="14" height="20" viewBox="0 0 14 20"><path d="M4 3 L10 10 L4 17" fill="none" stroke="#fff" stroke-width="2.4"/></svg>
</div>
</body></html>
